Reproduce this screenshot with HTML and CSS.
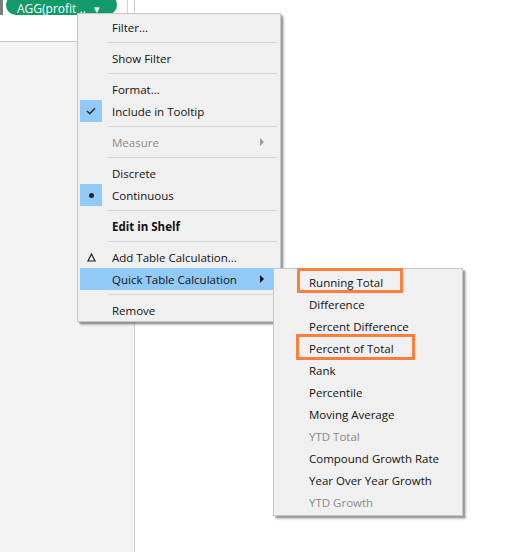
FILE: index.html
```html
<!DOCTYPE html>
<html>
<head>
<meta charset="utf-8">
<link rel="stylesheet" href="styles.css">
</head>
<body>
<div class="page">
  <aside class="side">
    <div class="strip">
      <span class="handle"></span>
      <span class="pill"><span class="pill-text">AGG(profit ..</span><span class="pill-arrow">▾</span></span>
      <span class="vline"></span>
    </div>
  </aside>
  <main class="canvas"></main>

  <div class="menu">
    <div class="item">Filter...</div>
    <div class="sep"></div>
    <div class="item">Show Filter</div>
    <div class="sep"></div>
    <div class="item">Format...</div>
    <div class="item"><span class="ico on"><svg width="10" height="8" viewBox="0 0 10 8"><path d="M1 4 L3.8 6.6 L9 1.2" fill="none" stroke="#333" stroke-width="1.5"/></svg></span>Include in Tooltip</div>
    <div class="sep"></div>
    <div class="item dis">Measure<span class="arrow grey"></span></div>
    <div class="sep"></div>
    <div class="item">Discrete</div>
    <div class="item"><span class="ico on"><span class="dot"></span></span>Continuous</div>
    <div class="sep"></div>
    <div class="item bold">Edit in Shelf</div>
    <div class="sep"></div>
    <div class="item"><span class="ico"><svg width="9" height="9" viewBox="0 0 9 9"><path d="M4.5 1 L8 8 L1 8 Z" fill="none" stroke="#222" stroke-width="1.2" stroke-linejoin="miter"/></svg></span>Add Table Calculation...</div>
    <div class="item hi">Quick Table Calculation<span class="arrow"></span></div>
    <div class="sep"></div>
    <div class="item">Remove</div>
  </div>

  <div class="submenu">
    <div class="item">Running Total</div>
    <div class="item">Difference</div>
    <div class="item">Percent Difference</div>
    <div class="item">Percent of Total</div>
    <div class="item">Rank</div>
    <div class="item">Percentile</div>
    <div class="item">Moving Average</div>
    <div class="item dis">YTD Total</div>
    <div class="item">Compound Growth Rate</div>
    <div class="item">Year Over Year Growth</div>
    <div class="item dis">YTD Growth</div>
    <span class="mark m1"></span>
    <span class="mark m2"></span>
  </div>
</div>
</body>
</html>
```

FILE: styles.css
```css
html, body {
  margin: 0;
  padding: 0;
  background: #fff;
}
body {
  font-family: "Open Sans", "Noto Sans", sans-serif;
  font-size: 11.5px;
  color: #111;
  overflow: hidden;
}
.page {
  position: relative;
  width: 509px;
  height: 552px;
  display: flex;
  overflow: hidden;
}
.side {
  width: 134px;
  flex: none;
  background: #f3f3f3;
  border-right: 1px solid #d2d2d2;
  display: flex;
  flex-direction: column;
}
.strip {
  height: 42px;
  background: #fff;
  border-bottom: 1px solid #c9c9c9;
  display: flex;
  align-items: flex-start;
  box-sizing: border-box;
}
.handle {
  width: 3px;
  height: 15px;
  background: #7d7d7d;
  flex: none;
}
.pill {
  margin-left: 3px;
  margin-top: -5px;
  width: 111px;
  height: 20px;
  box-sizing: border-box;
  border-radius: 10px;
  background: #119b69;
  color: #fff;
  font-size: 12px;
  line-height: 13px;
  padding: 6px 0 0 11px;
  display: flex;
  align-items: center;
  white-space: nowrap;
}
.pill-arrow {
  margin-left: 8px;
  font-size: 11px;
}
.vline {
  margin-left: 10px;
  width: 1px;
  height: 41px;
  background: #d0d0d0;
}
.canvas {
  flex: 1;
  background: #fff;
}

.menu, .submenu {
  position: absolute;
  background: #f0f0f0;
  border: 1px solid #c6c6c6;
  box-shadow: 2px 2px 0 rgba(0,0,0,0.18), 3px 3px 2px rgba(0,0,0,0.25);
  box-sizing: border-box;
}
.menu {
  left: 77px;
  top: 13px;
  width: 204px;
  padding: 2px 0 0;
}
.submenu {
  left: 273px;
  top: 268px;
  width: 190px;
  padding: 2px 0 2px;
}
.item {
  position: relative;
  height: 22px;
  line-height: 24px;
  padding-left: 32px;
  margin: 0 2px;
  white-space: nowrap;
}
.submenu .item {
  padding-left: 35px;
  margin: 0 1px 0 0;
}
.item.dis {
  color: #8a8a8a;
}
.item.bold {
  font-weight: 700;
}
.item.hi {
  background: #91c9f7;
}
.ico {
  position: absolute;
  left: 0;
  top: 0;
  width: 22px;
  height: 22px;
  display: flex;
  align-items: center;
  justify-content: center;
}
.ico.on {
  background: #91c9f7;
}
.dot {
  width: 5px;
  height: 5px;
  border-radius: 50%;
  background: #222;
}
.arrow {
  position: absolute;
  right: 14px;
  top: 7px;
  width: 0;
  height: 0;
  border-top: 4px solid transparent;
  border-bottom: 4px solid transparent;
  border-left: 4px solid #111;
}
.arrow.grey {
  border-left-color: #9a9a9a;
}
.sep {
  height: 9px;
  display: flex;
  align-items: center;
  padding: 0 3px 0 30px;
}
.sep::before {
  content: "";
  flex: 1;
  height: 1px;
  background: #d6d6d6;
}
.mark {
  position: absolute;
  border: 3px solid #fd7f3d;
  box-sizing: border-box;
}
.m1 {
  left: 23px;
  top: -1px;
  width: 106px;
  height: 25px;
}
.m2 {
  left: 22px;
  top: 65px;
  width: 119px;
  height: 26px;
}
```
